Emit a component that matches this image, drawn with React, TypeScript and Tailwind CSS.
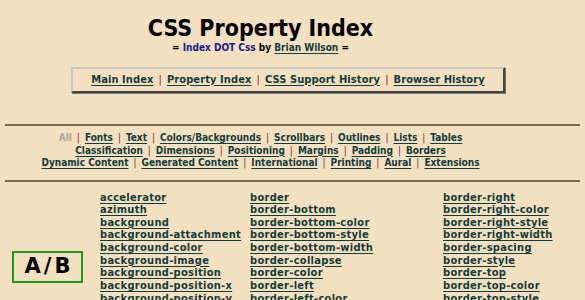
import React from 'react';

const font = { fontFamily: '"DejaVu Sans Condensed", "DejaVu Sans", Verdana, sans-serif' };

const linkCls = 'text-[#133c3c] underline underline-offset-[2px] decoration-[1px]';
const Sep = () => <span className="text-[#7a2a3a] font-normal mx-[5px]">|</span>;

const topNav = ['Main Index', 'Property Index', 'CSS Support History', 'Browser History'];

const catRows: string[][] = [
  ['Fonts', 'Text', 'Colors/Backgrounds', 'Scrollbars', 'Outlines', 'Lists', 'Tables'],
  ['Classification', 'Dimensions', 'Positioning', 'Margins', 'Padding', 'Borders'],
  ['Dynamic Content', 'Generated Content', 'International', 'Printing', 'Aural', 'Extensions'],
];

const col1 = [
  'accelerator', 'azimuth', 'background', 'background-attachment', 'background-color',
  'background-image', 'background-position', 'background-position-x', 'background-position-y',
];
const col2 = [
  'border', 'border-bottom', 'border-bottom-color', 'border-bottom-style', 'border-bottom-width',
  'border-collapse', 'border-color', 'border-left', 'border-left-color',
];
const col3 = [
  'border-right', 'border-right-color', 'border-right-style', 'border-right-width', 'border-spacing',
  'border-style', 'border-top', 'border-top-color', 'border-top-style',
];

const Column = ({ items }: { items: string[] }) => (
  <div className="flex flex-col">
    {items.map(p => (
      <a key={p} className={`${linkCls} leading-[12.65px] whitespace-nowrap`}>{p}</a>
    ))}
  </div>
);

export default function App() {
  return (
    <div className="w-[585px] h-[300px] overflow-hidden bg-[#f3e0c1] text-black font-bold text-[11px] tracking-[0.3px]" style={font}>
      {/* heading */}
      <div className="pr-[64px] pt-[13px] text-center">
        <h1 className="text-[23px] leading-[30px] font-bold tracking-normal">CSS Property Index</h1>
        <p className="text-[10px] leading-[13px] mt-[-2px] tracking-normal">
          = <span className="text-[#1a1a8a]">Index DOT Css</span> by{' '}
          <a className={linkCls}>Brian Wilson</a> =
        </p>
      </div>

      {/* main nav */}
      <div className="ml-[71px] mt-[13px] w-[434px] h-[26px] border-[2px] border-t-[#c8c8c8] border-l-[#c8c8c8] border-b-[#444] border-r-[#444] shadow-[1px_1px_0_#777] flex items-center justify-center tracking-[0.1px]">
        {topNav.map((t, i) => (
          <React.Fragment key={t}>
            {i > 0 && <Sep />}
            <a className={linkCls}>{t}</a>
          </React.Fragment>
        ))}
      </div>

      <hr className="mx-[5px] mt-[31px] border-0 h-[2px] bg-[#7b6a52]" />

      {/* categories */}
      <div className="pr-[64px] pt-[6px] text-center text-[10px] leading-[12.5px] tracking-normal">
        {catRows.map((row, r) => (
          <div key={r}>
            {r === 0 && (
              <>
                <span className="text-[#a8a8a8]">All</span>
                <Sep />
              </>
            )}
            {row.map((c, i) => (
              <React.Fragment key={c}>
                {i > 0 && <Sep />}
                <a className={linkCls}>{c}</a>
              </React.Fragment>
            ))}
          </div>
        ))}
      </div>

      <hr className="mx-[5px] mt-[10px] border-0 h-[2px] bg-[#7b6a52]" />

      {/* property list */}
      <div className="flex pt-[10px]">
        <div className="w-[100px] pl-[12px] pt-[59px]">
          <div
            className="w-[71px] h-[32px] border-[2px] border-[#1a9a1a] flex items-center justify-center pl-[3px] text-[21px] leading-none tracking-[3px]"
            style={{ fontFamily: '"DejaVu Sans", Verdana, sans-serif' }}
          >
            A/B
          </div>
        </div>
        <div className="w-[150px]">
          <Column items={col1} />
        </div>
        <div className="w-[193px]">
          <Column items={col2} />
        </div>
        <Column items={col3} />
      </div>
    </div>
  );
}
